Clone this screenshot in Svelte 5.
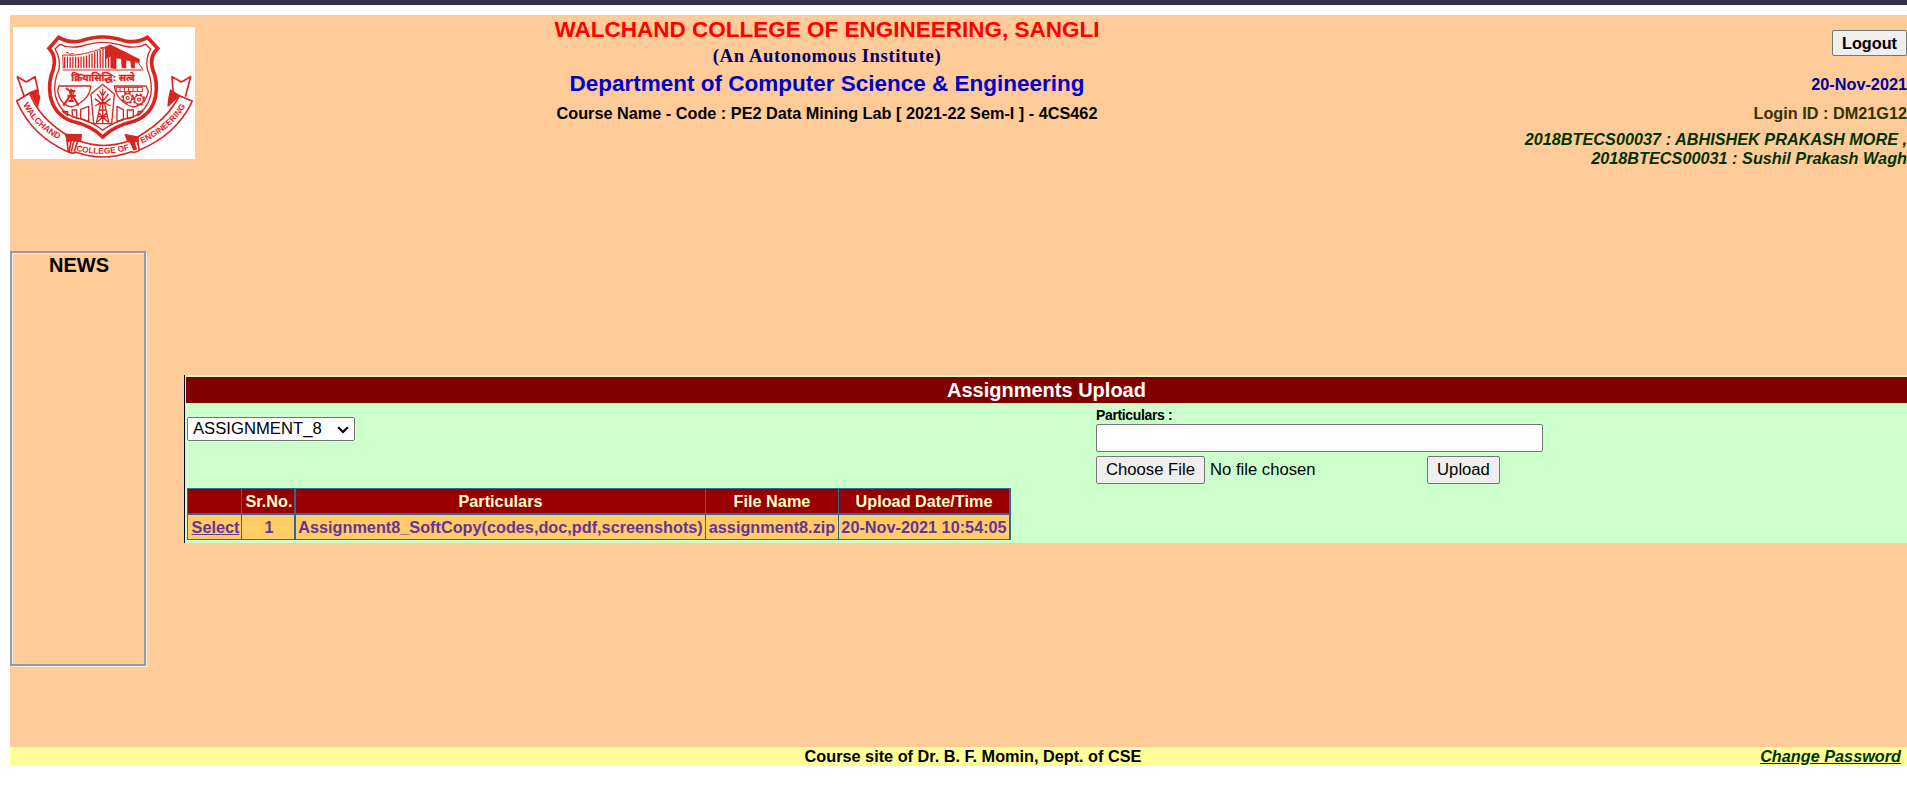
<script>
  const members = ['2018BTECS00037 : ABHISHEK PRAKASH MORE ,', '2018BTECS00031 : Sushil Prakash Wagh'];
  const columns = ['', 'Sr.No.', 'Particulars', 'File Name', 'Upload Date/Time'];
  const uploads = [
    { no: 1, particulars: 'Assignment8_SoftCopy(codes,doc,pdf,screenshots)', file: 'assignment8.zip', time: '20-Nov-2021 10:54:05' }
  ];
  const hangers = Array.from({ length: 18 }, (_, i) => 194 + i * 8.2);
</script>

<div class="strip"></div>
<div class="site">
  <header>
    <div class="crest">
      <svg viewBox="39 81 546 396" width="182" height="132" fill="none" stroke="#d9251f" stroke-width="4" stroke-linejoin="round">
        <rect x="39" y="81" width="546" height="396" fill="#fff" stroke="none" />
        <!-- ribbon tails -->
        <path stroke-width="5" d="M72 287L52 230L79 246L105 230L115 276M519 276L516 230L544 246L572 230L556 290" />
        <path fill="#d9251f" d="M91 277L111 270L119 292L113 318ZM512 270L537 287L504 318L507 292Z" />
        <!-- shield -->
        <path stroke-width="11" stroke-linejoin="miter" d="M176 112Q208 131 244 122Q282 110 308 111Q334 110 372 122Q410 131 442 112L473 145Q447 170 458 208Q474 245 467 288Q456 344 402 364Q344 377 308 411Q274 377 216 364Q162 344 151 288Q144 245 160 208Q171 170 147 145Z" />
        <path stroke-width="4" d="M180 133Q208 147 246 138Q286 126 308 127Q332 126 372 138Q410 147 437 133L452 147Q436 174 442 208Q459 248 452 286Q441 334 398 351Q342 363 308 391Q276 363 220 351Q177 334 166 286Q159 248 177 208Q182 174 165 147Z" />
        <!-- bridge -->
        <path stroke-width="3" d="M198 158Q206 155 210 164Q215 158 222 162M300 144Q308 140 311 146Q316 140 323 144M188 210H430M188 165Q250 172 330 135L390 165M190 205L188 165M330 150L410 180L428 208" />
        {#each hangers as x}
          <path stroke-width="4" d="M{x} {x < 250 ? 170 : 170 - (x - 250) * 0.4}V205" />
        {/each}
        <path fill="#d9251f" stroke-width="2" d="M316 145L331 135L418 178V188L404 186V204L394 203L392 183L378 180V204L366 203L364 176L348 174V206L334 204V168L318 175Z" />
        <!-- quarters -->
        <path d="M177 258H273Q269 300 216 321Q180 316 173 272ZM343 258H438L445 274Q435 318 397 321Q350 303 343 258ZM308 253L343 282L335 371H281L273 282Z" />
        <path d="M187 334H203V347ZM216 330H230V354L218 350ZM242 328L266 319V365L242 356ZM351 319L370 329V358L351 365ZM382 330H400V352L382 356ZM414 334H428L414 347Z" />
        <!-- surveyor's theodolite -->
        <path stroke-width="6" d="M198 264L209 273H226M214 266V287M209 289L190 317M215 289V304M219 289L236 317M202 287H228M205 303H221" />
        <circle cx="215" cy="277" r="6" stroke-width="4" />
        <!-- transmission tower -->
        <path d="M308 266V371M302 310L289 370M314 310L327 370M298 330H318M294 350H322M292 366L319 340M324 366L297 340M291 282L308 304L325 282M284 296L308 313L332 296M285 318L308 305L331 318M299 273L308 288L317 273" />
        <!-- machinery -->
        <path stroke-width="3" d="M349 262H427V275H349ZM360 262V275M373 262V275M386 262V275M399 262V275M412 262V275" />
        <circle cx="383" cy="294" r="16" stroke-dasharray="6.5 6.1" stroke-width="6" />
        <circle cx="383" cy="294" r="13" stroke-width="3.5" />
        <circle cx="383" cy="294" r="4.5" stroke-width="3.5" />
        <circle cx="417" cy="299" r="16" stroke-dasharray="6.5 6.1" stroke-width="6" />
        <circle cx="417" cy="299" r="13" stroke-width="3.5" fill="#fff" />
        <circle cx="417" cy="299" r="4.5" stroke-width="3.5" />
        <!-- scrolls -->
        <path fill="#fff" stroke-width="5" d="M50 303L89 279Q116 353 199 404L205 456Q95 408 50 303ZM577 303L538 287Q502 360 414 410L414 452Q531 404 577 303Z" />
        <path fill="#fff" stroke-width="5" d="M214 420L207 456Q216 462 229 457Q308 486 394 455Q408 460 418 450L410 414L384 424Q310 449 241 424Z" />
        <path fill="#d9251f" d="M197 403L244 404L242 425L214 420L203 426ZM376 404L412 411L411 424L394 428L383 424Z" />
        <path stroke-width="5" d="M222 422L214 455M232 425L223 455M401 423L409 449" />
        <path stroke-width="10" d="M394 425L405 450" />
        <path id="scroll-left" stroke="none" d="M66 307Q103 387 196 428" />
        <path id="scroll-mid" stroke="none" d="M224 451Q308 474 402 446" />
        <path id="scroll-right" stroke="none" d="M424 431Q522 386 563 306" />
        <g class="motto">
          <text font-size="26"><textPath href="#scroll-left" startOffset="7">WALCHAND</textPath></text>
          <text font-size="25"><textPath href="#scroll-mid" startOffset="4">COLLEGE OF</textPath></text>
          <text font-size="25"><textPath href="#scroll-right" startOffset="2">ENGINEERING</textPath></text>
          <text class="sanskrit" x="214" y="244" font-size="29" textLength="190" lengthAdjust="spacingAndGlyphs">क्रियासिद्धि: सत्वे</text>
        </g>
      </svg>
    </div>
    <div class="titles">
      <h1>WALCHAND COLLEGE OF ENGINEERING, SANGLI</h1>
      <p class="autonomous">(An Autonomous Institute)</p>
      <h2>Department of Computer Science &amp; Engineering</h2>
      <p class="course">Course Name - Code : PE2 Data Mining Lab [ 2021-22 Sem-I ] - 4CS462</p>
    </div>
    <div class="account">
      <button class="logout">Logout</button>
      <span class="date">20-Nov-2021</span>
      <span class="login">Login ID : DM21G12</span>
      <div class="members">
        {#each members as member}<div>{member}</div>{/each}
      </div>
    </div>
  </header>

  <div class="body">
    <aside>NEWS</aside>
    <main>
      <h3>Assignments Upload</h3>
      <div class="form">
        <div class="picker">
          <select><option>ASSIGNMENT_8</option></select>
          <svg viewBox="0 0 12 8" width="12" height="8"><path d="M1.2 1.2L6 6L10.8 1.2" fill="none" stroke="#000" stroke-width="2.2" /></svg>
        </div>
        <div class="upload">
          <label for="particulars">Particulars :</label>
          <input id="particulars" type="text" />
          <div class="send">
            <input type="file" />
            <button>Upload</button>
          </div>
        </div>
      </div>
      <table>
        <colgroup><col style="width:54px" /><col style="width:54px" /><col style="width:410px" /><col style="width:133px" /><col style="width:172px" /></colgroup>
        <thead>
          <tr>{#each columns as column}<th>{column}</th>{/each}</tr>
        </thead>
        <tbody>
          {#each uploads as row}
            <tr><td><span class="select">Select</span></td><td>{row.no}</td><td>{row.particulars}</td><td>{row.file}</td><td>{row.time}</td></tr>
          {/each}
        </tbody>
      </table>
    </main>
  </div>

  <footer>
    <span class="owner">Course site of Dr. B. F. Momin, Dept. of CSE</span>
    <span class="password">Change Password</span>
  </footer>
</div>

<style>
  :global(body) { background: #fff; overflow: hidden; }
  * { box-sizing: border-box; }
  .strip { height: 5px; background: #323444; }
  .site {
    margin: 10px 0 0 10px;
    background: #fc9;
    font: bold 16.25px/19px "Liberation Sans", Arial, sans-serif;
    color: #000;
  }
  header { display: grid; grid-template-columns: 237px 1160px 500px; height: 236px; }
  .crest { padding: 12px 0 0 3px; }
  .crest svg { display: block; }
  .motto { fill: #d9251f; stroke: none; font-family: "Liberation Sans", "Noto Sans", sans-serif; font-weight: bold; }
  .sanskrit { stroke: #d9251f; stroke-width: 1; }
  .titles { text-align: center; white-space: nowrap; }
  h1, h2, h3, p { margin: 0; }
  h1 { font-size: 22.5px; line-height: 30px; color: #f00; }
  .autonomous { font: bold 18.75px/21px "Liberation Serif", "Times New Roman", serif; letter-spacing: 0.55px; color: #006; }
  h2 { font-size: 22.5px; line-height: 36px; color: #00c; }
  .course { line-height: 23px; }
  .account { display: flex; flex-direction: column; align-items: flex-end; padding-top: 15px; white-space: nowrap; }
  button, input, select { font: 16.67px "Liberation Sans", Arial, sans-serif; color: #000; margin: 0; border: 1px solid #767676; border-radius: 2px; }
  button { padding: 0; background: #efefef; }
  .logout { width: 75px; height: 26px; font-size: 16.25px; font-weight: bold; }
  .date { margin-top: 19px; color: #009; }
  .login { margin-top: 10px; color: #330; }
  .members { margin-top: 7px; text-align: right; font-style: italic; color: #030; }
  .body { display: flex; height: 496px; }
  aside {
    width: 136px; height: 415px;
    border: 2px solid #999;
    box-shadow: inset 1px 1px 0 #eee, 1px 1px 0 #eee;
    text-align: center; text-indent: 2px; font-size: 20px; line-height: 24px;
  }
  main { flex: 1; height: 168px; margin: 124px 0 0 38px; padding: 2px 0 0 1px; border-left: 1px solid #000; background: #cfc; }
  h3 { height: 26px; background: #800000; color: #fff; font-size: 20px; line-height: 26px; text-align: center; }
  .form { display: grid; grid-template-columns: 909px 1fr; height: 85px; padding-left: 1px; }
  .picker { position: relative; width: 168px; height: 24px; margin-top: 14px; }
  select { display: block; width: 168px; height: 24px; padding: 0 5px; appearance: none; background: #fff; line-height: 22px; }
  .picker svg { position: absolute; right: 6px; top: 9px; }
  .upload { padding-top: 4px; }
  label { display: block; height: 17px; font-size: 14px; line-height: 17px; letter-spacing: -0.35px; }
  input[type='text'] { display: block; width: 447px; height: 28px; background: #fff; }
  .send { display: flex; height: 28px; margin-top: 4px; }
  input[type='file'] { width: 331px; height: 28px; padding: 0; border: 0; line-height: 28px; }
  input[type='file']::file-selector-button {
    width: 109px; height: 28px; margin: 0 5px 0 0; padding: 0;
    font: inherit; line-height: 26px; background: #efefef; border: 1px solid #767676; border-radius: 2px;
  }
  .send button { width: 73px; height: 28px; }
  table { width: 824px; margin-left: 1px; table-layout: fixed; border-spacing: 0; border: 1px solid #369; border-right: 0; white-space: nowrap; text-align: center; }
  th, td { height: 24px; padding: 0; border-right: 1px solid #369; line-height: 24px; }
  th:nth-child(2), td:nth-child(2), th:last-child, td:last-child { border-right-width: 2px; }
  th:nth-child(-n + 2), td:nth-child(-n + 2) { padding-left: 2px; }
  th { height: 26px; background: #900; color: #ffc; border-bottom: 2px solid #369; }
  td { background: #fc6; color: #639; }
  .select { text-decoration: underline; }
  footer { display: grid; grid-template-columns: 663px 600px 1fr; height: 19px; background: #ff9; }
  .owner { grid-column: 2; text-align: center; }
  .password { text-align: right; padding-right: 6px; font-style: italic; text-decoration: underline; color: #030; }
</style>
